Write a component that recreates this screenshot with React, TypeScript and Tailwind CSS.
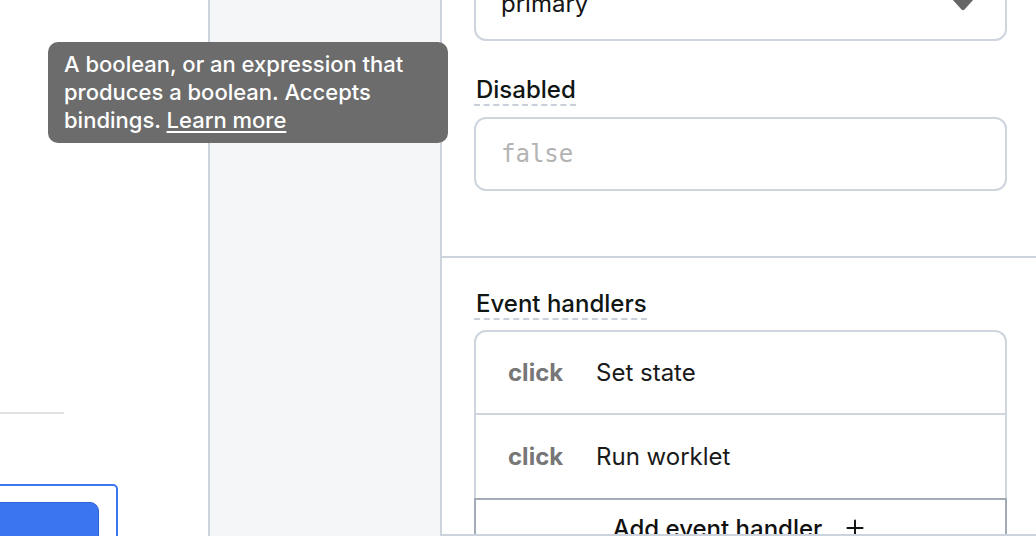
import React from "react";
import { Plus } from "lucide-react";

const handlers = [
  { event: "click", action: "Set state" },
  { event: "click", action: "Run worklet" },
];

function FieldLabel({ children }: { children: React.ReactNode }) {
  return (
    <div className="flex">
      <span className="text-[24px] leading-[28px] font-medium text-[#0f1613] border-b-2 border-dashed border-[#c9d0da] pl-[2px]">
        {children}
      </span>
    </div>
  );
}

export default function App() {
  return (
    <div
      className="relative w-[1036px] h-[536px] overflow-hidden flex bg-white"
      style={{ fontFamily: "Inter, 'Noto Sans', sans-serif" }}
    >
      {/* Canvas column */}
      <div className="w-[208px] shrink-0 flex flex-col">
        <div className="h-[412px] shrink-0" />
        <div className="h-[2px] w-[64px] shrink-0 bg-[#e2e2e2]" />
        <div className="mt-[70px] -ml-[12px] w-[130px] h-[80px] shrink-0 border-2 border-[#3c77f2] rounded-[5px] pt-[16px] pr-[17px]">
          <div className="h-[80px] rounded-[9px] bg-[#3b76f0] border border-[#2e62d6]" />
        </div>
      </div>

      {/* Middle column */}
      <div className="w-[234px] shrink-0 bg-[#f5f6f8] border-x-2 border-[#cdd3dc]" />

      {/* Inspector */}
      <div className="flex-1 flex flex-col overflow-hidden border-b-2 border-[#cdd3dc]">
        <div className="-mt-[33px] pl-[32px] pr-[29px] pb-[65px] shrink-0">
          <div className="h-[74px] rounded-[12px] border-2 border-[#cfd5de] flex items-center justify-between pl-[25px] pr-[30px]">
            <span className="text-[24px] text-[#151515]">primary</span>
            <svg width="24" height="13" viewBox="0 0 24 13">
              <path d="M1 1 H23 L13.5 11.5 Q12 13 10.5 11.5 Z" fill="#666666" />
            </svg>
          </div>
          <div className="mt-[35px]">
            <FieldLabel>Disabled</FieldLabel>
          </div>
          <div className="mt-[11px] h-[74px] rounded-[12px] border-2 border-[#cfd5de] flex items-center pl-[25px]">
            <span
              className="text-[24px] text-[#b3b3b3]"
              style={{ fontFamily: "'DejaVu Sans Mono', monospace" }}
            >
              false
            </span>
          </div>
        </div>

        <div className="border-t-2 border-[#cdd3dc] pt-[32px] pl-[32px] pr-[29px] shrink-0">
          <FieldLabel>Event handlers</FieldLabel>
          <div className="mt-[10px] border-x-2 border-t-2 border-[#cfd5de] rounded-t-[12px]">
            {handlers.map((h, i) => (
              <div
                key={i}
                className={`h-[83px] flex items-center pl-[32px] text-[24px] ${
                  i === 0 ? "border-b-2 border-[#cfd5de]" : ""
                }`}
              >
                <span className="w-[88px] font-bold text-[#777777]">{h.event}</span>
                <span className="text-[#1a1a1a]">{h.action}</span>
              </div>
            ))}
            <div className="-mx-[2px] h-[70px] border-2 border-[#a3abb6] flex items-start justify-center pt-[11px] gap-[20px]">
              <span className="text-[24px] font-medium text-[#111111]">Add event handler</span>
              <Plus size={26} strokeWidth={1.8} className="mt-[4px] text-[#111111]" />
            </div>
          </div>
        </div>
      </div>

      {/* Tooltip */}
      <div className="absolute left-[48px] top-[42px] w-[400px] rounded-[10px] bg-[#6b6c6b] px-[16px] pt-[8px] pb-[9px] text-[22px] leading-[28px] font-medium text-white">
        A boolean, or an expression that produces a boolean. Accepts bindings.{" "}
        <span className="underline underline-offset-[3px]">Learn more</span>
      </div>
    </div>
  );
}
